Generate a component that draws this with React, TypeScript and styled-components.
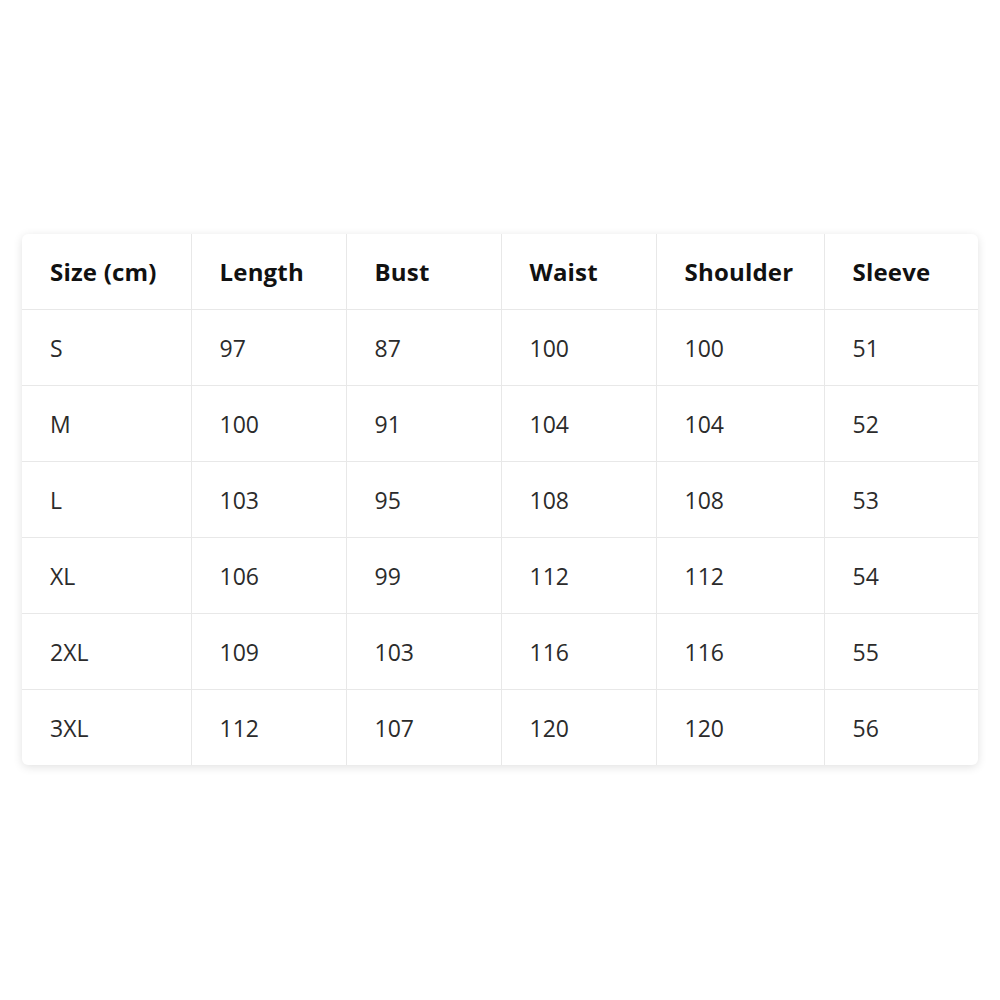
import React from 'react';
import styled, { createGlobalStyle } from 'styled-components';

const GlobalStyle = createGlobalStyle`
	html, body {
		margin: 0;
		padding: 0;
		background: #ffffff;
	}
	body {
		font-family: 'Open Sans', 'Noto Sans', sans-serif;
	}
`;

const Page = styled.div`
	width: 1000px;
	height: 1000px;
	display: flex;
	align-items: center;
	justify-content: center;
`;

const Card = styled.div`
	width: 956px;
	margin-top: -1px;
	background: #ffffff;
	border-radius: 6px;
	box-shadow: 0 2px 10px rgba(0, 0, 0, 0.12);
	overflow: hidden;
`;

const Table = styled.table`
	width: 100%;
	border-collapse: collapse;
	table-layout: fixed;
`;

const Cell = styled.td<{ $head?: boolean }>`
	height: 75px;
	padding: 0 0 0 28px;
	border: 1px solid #e8e8e8;
	font-size: ${(p) => (p.$head ? '24px' : '23px')};
	font-weight: ${(p) => (p.$head ? 700 : 400)};
	letter-spacing: ${(p) => (p.$head ? '0.2px' : '0')};
	color: ${(p) => (p.$head ? '#111111' : '#2b2b2b')};
	text-align: left;
	white-space: nowrap;

	&:first-child {
		border-left: none;
	}
	&:last-child {
		border-right: none;
	}
`;

const Row = styled.tr`
	&:first-child td {
		border-top: none;
	}
	&:last-child td {
		border-bottom: none;
	}
`;

const columns = [
	{ title: 'Size (cm)', width: 169 },
	{ title: 'Length', width: 155 },
	{ title: 'Bust', width: 155 },
	{ title: 'Waist', width: 155 },
	{ title: 'Shoulder', width: 168 },
	{ title: 'Sleeve', width: 154 },
];

const rows = [
	['S', '97', '87', '100', '100', '51'],
	['M', '100', '91', '104', '104', '52'],
	['L', '103', '95', '108', '108', '53'],
	['XL', '106', '99', '112', '112', '54'],
	['2XL', '109', '103', '116', '116', '55'],
	['3XL', '112', '107', '120', '120', '56'],
];

function App() {
	return (
		<>
			<GlobalStyle />
			<Page>
				<Card>
					<Table>
						<colgroup>
							{columns.map((c) => (
								<col key={c.title} style={{ width: c.width }} />
							))}
						</colgroup>
						<tbody>
							<Row>
								{columns.map((c) => (
									<Cell key={c.title} $head>
										{c.title}
									</Cell>
								))}
							</Row>
							{rows.map((r) => (
								<Row key={r[0]}>
									{r.map((v, i) => (
										<Cell key={i}>{v}</Cell>
									))}
								</Row>
							))}
						</tbody>
					</Table>
				</Card>
			</Page>
		</>
	);
}

export default App;
